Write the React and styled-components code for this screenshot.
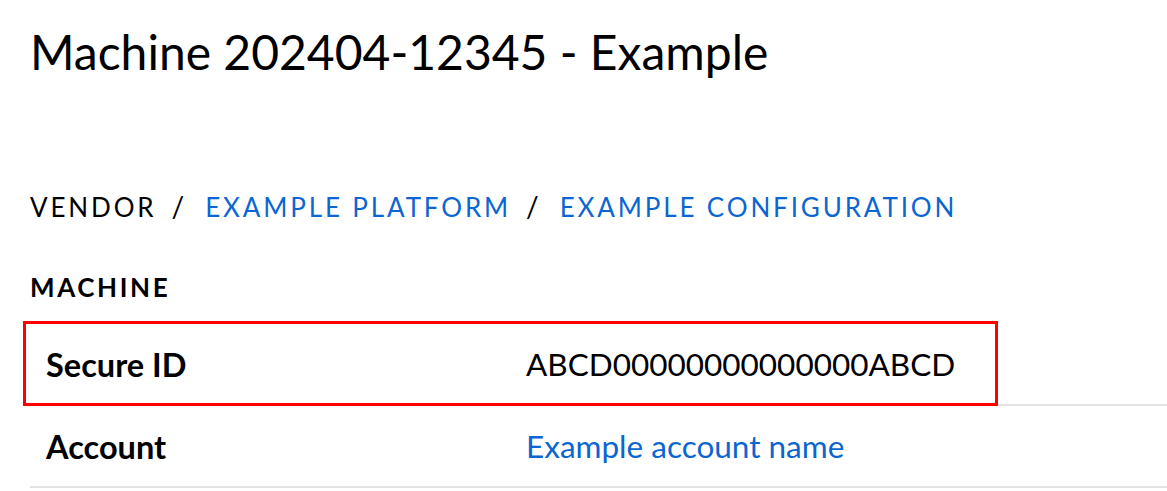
import styled, { createGlobalStyle } from "styled-components";

const GlobalStyle = createGlobalStyle`
  html, body {
    margin: 0;
    padding: 0;
    background: #fff;
  }

  body {
    font-family: Lato, "Noto Sans", sans-serif;
    color: #000;
  }
`;

const rows = [
  { label: "Secure ID", value: "ABCD00000000000000ABCD", highlight: true },
  { label: "Account", value: "Example account name", link: true },
];

const App = () => {
  return (
    <Page>
      <GlobalStyle />
      <Title>Machine 202404-12345 - Example</Title>
      <Breadcrumb>
        <Crumb>VENDOR</Crumb>
        <Sep>/</Sep>
        <Crumb href="#" $link>
          EXAMPLE PLATFORM
        </Crumb>
        <Sep>/</Sep>
        <Crumb href="#" $link>
          EXAMPLE CONFIGURATION
        </Crumb>
      </Breadcrumb>
      <Section>MACHINE</Section>
      <Table>
        {rows.map((row) => (
          <Row key={row.label} $highlight={row.highlight}>
            <Label>{row.label}</Label>
            <Value as={row.link ? "a" : "div"} href={row.link ? "#" : undefined} $link={row.link}>
              {row.value}
            </Value>
          </Row>
        ))}
      </Table>
    </Page>
  );
};

export default App;

const Page = styled.div`
  padding: 21px 0 0 30px;
`;

const Title = styled.h1`
  margin: 0;
  font-size: 48px;
  font-weight: 400;
  line-height: 62px;
`;

const Breadcrumb = styled.nav`
  display: flex;
  align-items: baseline;
  margin-top: 107px;
  font-size: 26px;
  letter-spacing: 0.11em;
  line-height: 32px;
`;

const Crumb = styled.a`
  color: ${(p) => (p.$link ? "#0b66d1" : "#000")};
  text-decoration: none;
`;

const Sep = styled.span`
  margin: 0 21px 0 15px;
  color: #000;
  font-size: 28px;
  letter-spacing: 0;
`;

const Section = styled.h2`
  margin: 48px 0 0;
  font-size: 26px;
  font-weight: 700;
  letter-spacing: 0.1em;
  line-height: 32px;
`;

const Table = styled.div`
  margin-top: 21px;
`;

const Row = styled.div`
  position: relative;
  display: grid;
  grid-template-columns: 480px 1fr;
  align-items: center;
  height: 80px;
  padding: 0 16px;
  border-bottom: 2px solid #e3e3e3;
  font-size: 31.5px;

  ${(p) =>
    p.$highlight &&
    `
    &::after {
      content: "";
      position: absolute;
      left: -7px;
      top: -3px;
      width: 969px;
      bottom: -2px;
      border: 3px solid #f00;
    }
  `}
`;

const Label = styled.div`
  font-weight: 700;
  font-size: 32.5px;
`;

const Value = styled.div`
  color: ${(p) => (p.$link ? "#0b66d1" : "#000")};
  text-decoration: none;
`;
